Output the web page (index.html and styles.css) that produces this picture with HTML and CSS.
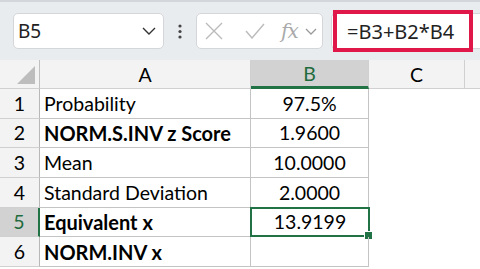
FILE: index.html
```html
<!DOCTYPE html>
<html lang="en">
<head>
    <meta charset="UTF-8">
    <title>Sheet</title>
    <link rel="stylesheet" href="styles.css">
</head>
<body>
    <div class="toolbar">
        <div class="namebox">
            <span>B5</span>
            <svg width="14" height="8" viewBox="0 0 14 8"><path d="M1 1 L7 7 L13 1" fill="none" stroke="#333" stroke-width="1.4"/></svg>
        </div>
        <div class="dots">
            <svg width="4" height="15" viewBox="0 0 4 15"><circle cx="2" cy="2" r="1.6" fill="#444"/><circle cx="2" cy="7.5" r="1.6" fill="#444"/><circle cx="2" cy="13" r="1.6" fill="#444"/></svg>
        </div>
        <div class="fxbox">
            <svg width="18" height="18" viewBox="0 0 18 18"><path d="M1 1 L17 17 M17 1 L1 17" stroke="#bbb" stroke-width="1.4"/></svg>
            <svg width="20" height="16" viewBox="0 0 20 16"><path d="M1 8 L7 15 L19 1" fill="none" stroke="#bbb" stroke-width="1.4"/></svg>
            <span class="fx">fx</span>
            <svg width="12" height="7" viewBox="0 0 12 7"><path d="M1 1 L6 6 L11 1" fill="none" stroke="#999" stroke-width="1.3"/></svg>
        </div>
        <div class="formula">
            <span>=B3+B2*B4</span>
            <div class="highlight"></div>
        </div>
    </div>

    <div class="sheet">
        <div class="corner"><div class="tri"></div></div>
        <div class="colhead">A</div>
        <div class="colhead active">B</div>
        <div class="colhead">C</div>
        <div class="colhead last"></div>

        <div class="rowhead">1</div>
        <div class="cell">Probability</div>
        <div class="cell num">97.5%</div>
        <div class="blank"></div><div class="blank"></div>

        <div class="rowhead">2</div>
        <div class="cell bold">NORM.S.INV z Score</div>
        <div class="cell num">1.9600</div>
        <div class="blank"></div><div class="blank"></div>

        <div class="rowhead">3</div>
        <div class="cell">Mean</div>
        <div class="cell num">10.0000</div>
        <div class="blank"></div><div class="blank"></div>

        <div class="rowhead">4</div>
        <div class="cell">Standard Deviation</div>
        <div class="cell num">2.0000</div>
        <div class="blank"></div><div class="blank"></div>

        <div class="rowhead active">5</div>
        <div class="cell bold">Equivalent x</div>
        <div class="cell num selected">13.9199<div class="handle"></div></div>
        <div class="blank"></div><div class="blank"></div>

        <div class="rowhead">6</div>
        <div class="cell bold">NORM.INV x</div>
        <div class="cell num"></div>
        <div class="blank"></div><div class="blank"></div>
    </div>
</body>
</html>
```

FILE: styles.css
```css
body {
    margin: 0;
    background-color: #ffffff;
    overflow: hidden;
    font-family: Lato, "Liberation Sans", sans-serif;
}
.toolbar {
    height: 60px;
    background-color: #e9ecef;
    border-top: 2px solid #d3d6da;
    box-sizing: border-box;
    display: flex;
    align-items: flex-start;
    padding-top: 11px;
    padding-left: 13px;
}
.namebox {
    width: 151px;
    height: 36px;
    box-sizing: border-box;
    background: #ffffff;
    border: 1px solid #d4d6d9;
    border-radius: 5px;
    display: flex;
    align-items: center;
    justify-content: space-between;
    padding: 0 7px 0 4px;
    font-family: "Noto Sans", sans-serif;
    font-size: 19px;
    color: #222;
}
.dots {
    width: 32px;
    height: 36px;
    display: flex;
    align-items: center;
    justify-content: center;
}
.fxbox {
    width: 127px;
    height: 36px;
    box-sizing: border-box;
    background: #ffffff;
    border: 1px solid #d4d6d9;
    border-radius: 5px;
    display: flex;
    align-items: center;
    padding-left: 8px;
}
.fxbox svg:nth-child(2) {
    margin-left: 22px;
}
.fx {
    font-family: "DejaVu Serif", serif;
    font-style: italic;
    font-size: 20px;
    color: #aaa;
    margin-left: 16px;
    letter-spacing: -1px;
}
.fxbox svg:last-child {
    margin-left: 7px;
}
.formula {
    position: relative;
    flex: 1;
    height: 36px;
    margin-left: 8px;
    box-sizing: border-box;
    background: #ffffff;
    border: 1px solid #d4d6d9;
    border-right: none;
    border-radius: 5px 0 0 5px;
    display: flex;
    align-items: center;
    padding-left: 15px;
    font-family: "Noto Sans", sans-serif;
    font-size: 20px;
    color: #222;
}
.highlight {
    position: absolute;
    left: 1px;
    top: -4px;
    width: 140px;
    height: 42px;
    box-sizing: border-box;
    border: 4px solid #e0184a;
}
.sheet {
    display: grid;
    grid-template-columns: 40px 211px 118px 96px 1fr;
    grid-template-rows: 29px repeat(6, 29.67px);
    font-size: 19.5px;
    color: #000;
}
.corner, .colhead, .rowhead {
    background-color: #f3f3f3;
    border-right: 1px solid #d0d0d0;
    border-bottom: 1px solid #d0d0d0;
    box-sizing: border-box;
}
.corner {
    position: relative;
    border-right-color: #c0c0c0;
}
.tri {
    position: absolute;
    right: 4px;
    bottom: 4px;
    width: 0;
    height: 0;
    border-left: 18px solid transparent;
    border-bottom: 18px solid #bdbdbd;
}
.colhead {
    display: flex;
    align-items: center;
    justify-content: center;
}
.colhead.last {
    border-right: none;
}
.colhead.active {
    background-color: #d2d2d2;
    color: #1f6b3d;
    border-bottom: 3px solid #217346;
}
.rowhead {
    display: flex;
    align-items: center;
    justify-content: center;
    border-right-color: #b8b8b8;
}
.rowhead.active {
    background-color: #d2d2d2;
    color: #1f6b3d;
    border-right: 2px solid #217346;
}
.cell {
    position: relative;
    display: flex;
    align-items: center;
    padding-left: 4px;
    border-right: 1px solid #c4c4c4;
    border-bottom: 1px solid #c4c4c4;
    box-sizing: border-box;
    white-space: nowrap;
}
.bold {
    font-weight: bold;
    font-size: 20px;
}
.num {
    justify-content: center;
    padding-left: 0;
}
.selected {
    border: 2px solid #217346;
    margin: -1px -1px 0 -1px;
}
.handle {
    position: absolute;
    right: -5px;
    bottom: -5px;
    width: 7px;
    height: 7px;
    background: #217346;
    border: 1px solid #ffffff;
}
.blank {
    background: #ffffff;
}
```
